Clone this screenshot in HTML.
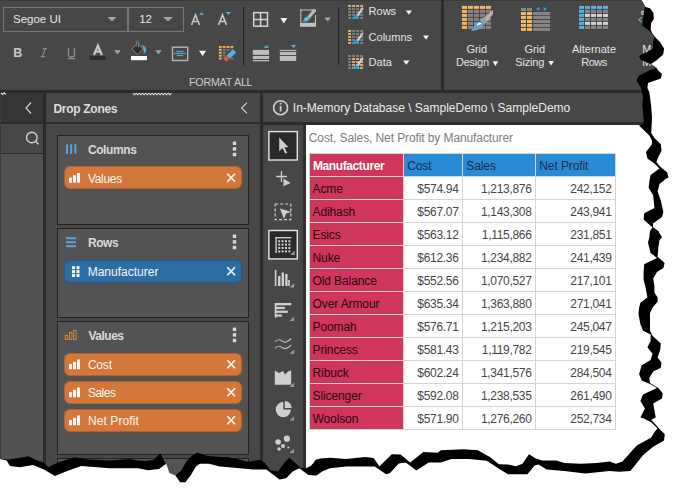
<!DOCTYPE html>
<html><head><meta charset="utf-8">
<style>
*{margin:0;padding:0;box-sizing:border-box}
html,body{width:683px;height:494px;overflow:hidden;background:#fff}
body{position:relative;font-family:"Liberation Sans",sans-serif}
.a{position:absolute}
.t{position:absolute;white-space:nowrap;line-height:1}
svg{position:absolute;overflow:visible}
</style></head><body>

<div class="a" style="left:0px;top:0px;width:683px;height:90px;background:#474747;"></div>
<div class="a" style="left:0px;top:0px;width:683px;height:1px;background:#3c3c3c;"></div>
<div class="a" style="left:0px;top:90px;width:683px;height:3px;background:#2c2c2c;"></div>
<!-- font boxes -->
<div class="a" style="left:3px;top:7px;width:125px;height:25px;border:1px solid #767676"></div>
<div class="a" style="left:128px;top:7px;width:56px;height:25px;border:1px solid #767676"></div>
<svg style="left:0;top:0" width="683" height="90">
 <g fill="#a8a8a8">
  <polygon points="107.5,17 116.5,17 112,21.5"/>
  <polygon points="163,17 173,17 168,21.5"/>
  <polygon points="114.3,50.2 120.7,50.2 117.5,54.3"/>
  <polygon points="155.3,50.2 161.7,50.2 158.5,54.3"/>
  <polygon points="324.4,17.5 331,17.5 327.7,21.5"/>
 </g>
 <g fill="#f2f2f2">
  <polygon points="199,50.8 206.2,50.8 202.6,56.1"/>
  <polygon points="280.3,17.9 287.3,17.9 283.8,23.4"/>
  <polygon points="405.8,10.6 412,10.6 408.9,14.8"/>
  <polygon points="423,35.6 429,35.6 426,39.8"/>
  <polygon points="403,60.6 409.6,60.6 406.3,64.8"/>
  <polygon points="492.6,61.2 498.2,61.2 495.4,65.9"/>
  <polygon points="548.4,61 553.8,61 551.1,65.7"/>
 </g>
 <!-- A grow / shrink -->
 <g fill="none" stroke="#c4c4c4" stroke-width="1.7">
  <path d="M191.5,25 L195.5,15 L199.5,25 M193,21.5 L198,21.5"/>
  <path d="M218.5,25 L222.5,15 L226.5,25 M220,21.5 L225,21.5"/>
 </g>
 <polygon points="198.9,14.8 204.2,14.8 201.55,12.2" fill="#5aaee0"/>
 <polygon points="225.7,12 231.1,12 228.4,14.8" fill="#5aaee0"/>
 <!-- B I U -->
 <text x="13.2" y="57" font-family="Liberation Sans" font-weight="bold" font-size="12.5" fill="#cacaca">B</text>
 <path d="M42.6,48.6 H47 M40.6,56.6 H45 M45.3,48.6 L42.4,56.6" fill="none" stroke="#8c8c8c" stroke-width="1.3"/>
 <path d="M68.5,48 V54.5 Q68.5,57 71.5,57 Q74.5,57 74.5,54.5 V48" fill="none" stroke="#8c8c8c" stroke-width="1.3"/>
 <rect x="67.9" y="58" width="7.1" height="1.3" fill="#8c8c8c"/>
 <!-- font color A -->
 <path d="M93.9,55 L97.9,45.6 L101.9,55 M95.3,51.6 L100.5,51.6" fill="none" stroke="#c8c8c8" stroke-width="2.2"/>
 <rect x="90" y="56" width="16" height="4" fill="#2e2e2e"/>
 <!-- paint bucket -->
 <path d="M137.5,43.4 L143.2,49 L137.5,54.7 L131.8,49 Z" fill="#2e2e2e" stroke="#8a8a8a" stroke-width="0.9" stroke-linejoin="round"/>
 <path d="M136.3,46.5 V42.3 Q137.5,39.2 138.7,42.3 V46.5" fill="none" stroke="#8a8a8a" stroke-width="0.8"/>
 <circle cx="138.4" cy="46.6" r="0.7" fill="#b0b0b0"/>
 <path d="M141.2,44.6 Q146.8,46 146.2,50.8 Q145.8,53.2 143.4,54 Q144.6,49.4 141.2,44.6 Z" fill="#4fa6dc"/>
 <rect x="131" y="56" width="16" height="4.2" fill="#ffffff"/>
 <!-- border box -->
 <rect x="172.5" y="47.2" width="15.2" height="13.3" fill="none" stroke="#b4b4b4" stroke-width="1.4"/>
 <g fill="#5aaee0"><rect x="176.1" y="50.9" width="7.6" height="1"/><rect x="174.1" y="52.9" width="12" height="1"/><rect x="176.7" y="55" width="6.3" height="1"/></g>
 <!-- grid eraser -->
 <g fill="#f0b060">
  <rect x="218.9" y="46" width="2.8" height="1.9"/><rect x="222.8" y="46" width="2.8" height="1.9"/><rect x="226.7" y="46" width="2.8" height="1.9"/><rect x="230.6" y="46" width="2.8" height="1.9"/>
  <rect x="218.9" y="48.9" width="2.8" height="1.9"/><rect x="218.9" y="51.8" width="2.8" height="1.9"/><rect x="218.9" y="54.7" width="2.8" height="1.9"/><rect x="218.9" y="57.6" width="2.8" height="1.9"/>
 </g>
 <g fill="#7c7c7c">
  <rect x="222.8" y="48.9" width="2.8" height="1.9"/><rect x="226.7" y="48.9" width="2.8" height="1.9"/><rect x="230.6" y="48.9" width="2.8" height="1.9"/>
  <rect x="222.8" y="51.8" width="2.8" height="1.9"/><rect x="222.8" y="54.7" width="2.8" height="1.9"/><rect x="230.6" y="57.6" width="2.8" height="1.9"/>
 </g>
 <g transform="translate(229.6,55.6) rotate(-42)">
  <rect x="-7" y="-2.6" width="14" height="5.2" fill="#474747"/>
  <rect x="-2.3" y="-2.3" width="9" height="4.6" fill="#5aaee0"/>
  <rect x="-6.7" y="-2.3" width="4" height="4.6" fill="#e2583e"/>
 </g>
 <!-- separators -->
 <rect x="243" y="7" width="1.2" height="58" fill="#262626"/>
 <rect x="338" y="7" width="1.2" height="58" fill="#262626"/>
 <rect x="441" y="0" width="3" height="90" fill="#2b2b2b"/>
 <!-- grid all borders -->
 <g fill="none" stroke="#d4d4d4" stroke-width="1.5">
  <rect x="253.7" y="12.6" width="13.8" height="13.6"/>
  <path d="M260.6,12.6 V26.2 M253.7,19.4 H267.5"/>
 </g>
 <!-- border paint -->
 <g fill="#c2c2c2">
  <rect x="300" y="9.5" width="16" height="1"/>
  <rect x="300.3" y="9.5" width="1" height="13"/>
  <rect x="315" y="15" width="1" height="8"/>
  <rect x="300" y="22.8" width="16" height="4"/>
 </g>
 <path d="M313.8,8.6 L316.4,10.8 L309.6,18.8 L307.2,16.8 Z" fill="#b8b8b8"/>
 <path d="M307,16.6 L309.8,19 Q308.5,21.8 305.5,21.8 L302.4,21.6 Q303.6,20.6 303.8,19.2 Q304.5,17 307,16.6 Z" fill="#4fa6dc"/>
 <path d="M305,19.6 Q306.2,18.4 307.6,18.8" fill="none" stroke="#e8f4fb" stroke-width="0.7"/>
 <!-- row height -->
 <g fill="#bdbdbd">
  <rect x="252.8" y="49.9" width="16.3" height="5"/><rect x="252.8" y="56" width="16.3" height="3"/><rect x="252.8" y="60" width="16.3" height="1.3"/>
  <rect x="279.8" y="49.9" width="16.4" height="1.2"/><rect x="279.8" y="52" width="16.4" height="3.1"/><rect x="279.8" y="56" width="16.4" height="5"/>
 </g>
 <polygon points="263.8,47.8 269.1,47.8 266.45,44.9" fill="#5aaee0"/>
 <polygon points="290.9,44.9 296.2,44.9 293.55,48.1" fill="#5aaee0"/>
</svg>
<svg style="left:0;top:0" width="683" height="90">
<rect x="348.1" y="5.1" width="3" height="1.8" fill="#f2b566"/><rect x="352.1" y="5.1" width="3" height="1.8" fill="#f2b566"/><rect x="356.1" y="5.1" width="3" height="1.8" fill="#f2b566"/><rect x="360.1" y="5.1" width="3" height="1.8" fill="#f2b566"/><rect x="348.1" y="8.1" width="3" height="1.8" fill="#858585"/><rect x="352.1" y="8.1" width="3" height="1.8" fill="#858585"/><rect x="356.1" y="8.1" width="3" height="1.8" fill="#858585"/><rect x="360.1" y="8.1" width="3" height="1.8" fill="#858585"/><rect x="348.1" y="11.1" width="3" height="1.8" fill="#858585"/><rect x="352.1" y="11.1" width="3" height="1.8" fill="#858585"/><rect x="356.1" y="11.1" width="3" height="1.8" fill="#858585"/><rect x="360.1" y="11.1" width="3" height="1.8" fill="#858585"/><rect x="348.1" y="14.1" width="3" height="1.8" fill="#858585"/><rect x="352.1" y="14.1" width="3" height="1.8" fill="#858585"/><rect x="356.1" y="14.1" width="3" height="1.8" fill="#858585"/><rect x="360.1" y="14.1" width="3" height="1.8" fill="#858585"/><rect x="348.1" y="17.1" width="3" height="1.8" fill="#858585"/><rect x="352.1" y="17.1" width="3" height="1.8" fill="#858585"/><rect x="356.1" y="17.1" width="3" height="1.8" fill="#858585"/><rect x="360.1" y="17.1" width="3" height="1.8" fill="#858585"/>
<path d="M356.5,15.1 L362.5,7.1 L363.5,8.6 L358.5,16.6 Z" fill="#d0d0d0"/>
<path d="M356.3,14.9 Q353.5,15.6 353,18.299999999999997 L351.5,19.1 L357.5,19.1 Q359,17.1 358.5,16.299999999999997 Z" fill="#1fa2e2"/>
<rect x="348.1" y="30.1" width="3" height="1.8" fill="#f2b566"/><rect x="352.1" y="30.1" width="3" height="1.8" fill="#858585"/><rect x="356.1" y="30.1" width="3" height="1.8" fill="#858585"/><rect x="360.1" y="30.1" width="3" height="1.8" fill="#858585"/><rect x="348.1" y="33.1" width="3" height="1.8" fill="#f2b566"/><rect x="352.1" y="33.1" width="3" height="1.8" fill="#858585"/><rect x="356.1" y="33.1" width="3" height="1.8" fill="#858585"/><rect x="360.1" y="33.1" width="3" height="1.8" fill="#858585"/><rect x="348.1" y="36.1" width="3" height="1.8" fill="#f2b566"/><rect x="352.1" y="36.1" width="3" height="1.8" fill="#858585"/><rect x="356.1" y="36.1" width="3" height="1.8" fill="#858585"/><rect x="360.1" y="36.1" width="3" height="1.8" fill="#858585"/><rect x="348.1" y="39.1" width="3" height="1.8" fill="#f2b566"/><rect x="352.1" y="39.1" width="3" height="1.8" fill="#858585"/><rect x="356.1" y="39.1" width="3" height="1.8" fill="#858585"/><rect x="360.1" y="39.1" width="3" height="1.8" fill="#858585"/><rect x="348.1" y="42.1" width="3" height="1.8" fill="#f2b566"/><rect x="352.1" y="42.1" width="3" height="1.8" fill="#858585"/><rect x="356.1" y="42.1" width="3" height="1.8" fill="#858585"/><rect x="360.1" y="42.1" width="3" height="1.8" fill="#858585"/>
<path d="M356.5,40.1 L362.5,32.1 L363.5,33.6 L358.5,41.6 Z" fill="#d0d0d0"/>
<path d="M356.3,39.900000000000006 Q353.5,40.6 353,43.3 L351.5,44.1 L357.5,44.1 Q359,42.1 358.5,41.3 Z" fill="#1fa2e2"/>
<rect x="348.1" y="55.1" width="3" height="1.8" fill="#858585"/><rect x="352.1" y="55.1" width="3" height="1.8" fill="#858585"/><rect x="356.1" y="55.1" width="3" height="1.8" fill="#858585"/><rect x="360.1" y="55.1" width="3" height="1.8" fill="#858585"/><rect x="348.1" y="58.1" width="3" height="1.8" fill="#858585"/><rect x="352.1" y="58.1" width="3" height="1.8" fill="#f2b566"/><rect x="356.1" y="58.1" width="3" height="1.8" fill="#f2b566"/><rect x="360.1" y="58.1" width="3" height="1.8" fill="#f2b566"/><rect x="348.1" y="61.1" width="3" height="1.8" fill="#858585"/><rect x="352.1" y="61.1" width="3" height="1.8" fill="#f2b566"/><rect x="356.1" y="61.1" width="3" height="1.8" fill="#f2b566"/><rect x="360.1" y="61.1" width="3" height="1.8" fill="#f2b566"/><rect x="348.1" y="64.1" width="3" height="1.8" fill="#858585"/><rect x="352.1" y="64.1" width="3" height="1.8" fill="#f2b566"/><rect x="356.1" y="64.1" width="3" height="1.8" fill="#f2b566"/><rect x="360.1" y="64.1" width="3" height="1.8" fill="#f2b566"/><rect x="348.1" y="67.1" width="3" height="1.8" fill="#858585"/><rect x="352.1" y="67.1" width="3" height="1.8" fill="#f2b566"/><rect x="356.1" y="67.1" width="3" height="1.8" fill="#f2b566"/><rect x="360.1" y="67.1" width="3" height="1.8" fill="#f2b566"/>
<path d="M356.5,65.1 L362.5,57.1 L363.5,58.6 L358.5,66.6 Z" fill="#d0d0d0"/>
<path d="M356.3,64.9 Q353.5,65.6 353,68.3 L351.5,69.1 L357.5,69.1 Q359,67.1 358.5,66.3 Z" fill="#1fa2e2"/>
<rect x="461.9" y="5.9" width="5.1" height="3" fill="#f2b566"/><rect x="467.9" y="5.9" width="5.1" height="3" fill="#f2b566"/><rect x="473.9" y="5.9" width="5.1" height="3" fill="#f2b566"/><rect x="479.9" y="5.9" width="5.1" height="3" fill="#f2b566"/><rect x="485.9" y="5.9" width="5.1" height="3" fill="#f2b566"/><rect x="461.9" y="9.9" width="5.1" height="3" fill="#f2b566"/><rect x="467.9" y="9.9" width="5.1" height="3" fill="#858585"/><rect x="473.9" y="9.9" width="5.1" height="3" fill="#858585"/><rect x="479.9" y="9.9" width="5.1" height="3" fill="#858585"/><rect x="485.9" y="9.9" width="5.1" height="3" fill="#858585"/><rect x="461.9" y="13.9" width="5.1" height="3" fill="#f2b566"/><rect x="467.9" y="13.9" width="5.1" height="3" fill="#858585"/><rect x="473.9" y="13.9" width="5.1" height="3" fill="#858585"/><rect x="479.9" y="13.9" width="5.1" height="3" fill="#858585"/><rect x="485.9" y="13.9" width="5.1" height="3" fill="#858585"/><rect x="461.9" y="17.9" width="5.1" height="3" fill="#f2b566"/><rect x="467.9" y="17.9" width="5.1" height="3" fill="#858585"/><rect x="473.9" y="17.9" width="5.1" height="3" fill="#858585"/><rect x="479.9" y="17.9" width="5.1" height="3" fill="#858585"/><rect x="485.9" y="17.9" width="5.1" height="3" fill="#858585"/><rect x="461.9" y="21.9" width="5.1" height="3" fill="#f2b566"/><rect x="467.9" y="21.9" width="5.1" height="3" fill="#858585"/><rect x="473.9" y="21.9" width="5.1" height="3" fill="#858585"/><rect x="479.9" y="21.9" width="5.1" height="3" fill="#858585"/><rect x="485.9" y="21.9" width="5.1" height="3" fill="#858585"/><rect x="461.9" y="25.9" width="5.1" height="3" fill="#f2b566"/><rect x="467.9" y="25.9" width="5.1" height="3" fill="#858585"/><rect x="473.9" y="25.9" width="5.1" height="3" fill="#858585"/><rect x="479.9" y="25.9" width="5.1" height="3" fill="#858585"/><rect x="485.9" y="25.9" width="5.1" height="3" fill="#858585"/>
<path d="M483,19 L492.9,9.7 L493,14 L486.5,22.5 Z" fill="#b4b4b4"/>
<path d="M480,20 L484,17 L487.5,21 L484,24.5 Z" fill="#a0a0a0"/>
<path d="M480.5,21.5 Q476,21 474.5,25 Q473.5,29 470.7,30.9 Q479,31 482.5,26.5 Q484.5,23.5 483.5,22.5 Z" fill="#5aa6d6"/>
<path d="M477,24.5 Q479.5,21.5 482,24 Q479.5,23.5 477.5,25.5 Z" fill="#ffffff"/>
<rect x="521" y="8" width="5" height="3" fill="#858585"/><rect x="527" y="8" width="5" height="3" fill="#858585"/>
<rect x="521" y="12" width="5" height="3" fill="#f2b566"/><rect x="527" y="12" width="5" height="3" fill="#f2b566"/><rect x="533.1" y="12" width="17" height="3" fill="#858585"/>
<rect x="521" y="15.9" width="5" height="3" fill="#f2b566"/><rect x="527" y="15.9" width="5" height="3" fill="#f2b566"/><rect x="533.1" y="15.9" width="17" height="3" fill="#858585"/>
<rect x="521" y="20" width="5" height="3" fill="#f2b566"/><rect x="527" y="20" width="5" height="3" fill="#f2b566"/><rect x="533.1" y="20" width="17" height="3" fill="#858585"/>
<rect x="521" y="23.9" width="5" height="3" fill="#f2b566"/><rect x="527" y="23.9" width="5" height="3" fill="#f2b566"/><rect x="533.1" y="23.9" width="17" height="3" fill="#858585"/>
<rect x="521" y="27.9" width="5" height="3" fill="#f2b566"/><rect x="527" y="27.9" width="5" height="3" fill="#f2b566"/><rect x="533.1" y="27.9" width="17" height="3" fill="#858585"/>
<polygon points="539.4,7 539.4,10.9 536,8.95" fill="#1aa8e8"/><polygon points="543.6,7 543.6,10.9 547,8.95" fill="#1aa8e8"/>
<rect x="579.0" y="5.9" width="5" height="3" fill="#5ab0e0"/><rect x="585.0" y="5.9" width="5" height="3" fill="#5ab0e0"/><rect x="591.0" y="5.9" width="5" height="3" fill="#5ab0e0"/><rect x="597.0" y="5.9" width="5" height="3" fill="#5ab0e0"/><rect x="603.0" y="5.9" width="5" height="3" fill="#5ab0e0"/><rect x="579.0" y="9.9" width="5" height="3" fill="#5ab0e0"/><rect x="585.0" y="9.9" width="5" height="3" fill="#858585"/><rect x="591.0" y="9.9" width="5" height="3" fill="#858585"/><rect x="597.0" y="9.9" width="5" height="3" fill="#858585"/><rect x="603.0" y="9.9" width="5" height="3" fill="#858585"/><rect x="579.0" y="13.9" width="5" height="3" fill="#5ab0e0"/><rect x="585.0" y="13.9" width="5" height="3" fill="#d2d2d2"/><rect x="591.0" y="13.9" width="5" height="3" fill="#d2d2d2"/><rect x="597.0" y="13.9" width="5" height="3" fill="#d2d2d2"/><rect x="603.0" y="13.9" width="5" height="3" fill="#d2d2d2"/><rect x="579.0" y="17.9" width="5" height="3" fill="#5ab0e0"/><rect x="585.0" y="17.9" width="5" height="3" fill="#858585"/><rect x="591.0" y="17.9" width="5" height="3" fill="#858585"/><rect x="597.0" y="17.9" width="5" height="3" fill="#858585"/><rect x="603.0" y="17.9" width="5" height="3" fill="#858585"/><rect x="579.0" y="21.9" width="5" height="3" fill="#5ab0e0"/><rect x="585.0" y="21.9" width="5" height="3" fill="#d2d2d2"/><rect x="591.0" y="21.9" width="5" height="3" fill="#d2d2d2"/><rect x="597.0" y="21.9" width="5" height="3" fill="#d2d2d2"/><rect x="603.0" y="21.9" width="5" height="3" fill="#d2d2d2"/><rect x="579.0" y="25.9" width="5" height="3" fill="#5ab0e0"/><rect x="585.0" y="25.9" width="5" height="3" fill="#858585"/><rect x="591.0" y="25.9" width="5" height="3" fill="#858585"/><rect x="597.0" y="25.9" width="5" height="3" fill="#858585"/><rect x="603.0" y="25.9" width="5" height="3" fill="#858585"/>
</svg>

<div class="a" style="left:0px;top:93px;width:43px;height:30px;background:#363636;"></div>
<div class="a" style="left:0px;top:122px;width:43px;height:2px;background:#2c2c2c;"></div>
<div class="a" style="left:0px;top:124px;width:43px;height:29px;background:#474747;"></div>
<div class="a" style="left:0px;top:153px;width:43px;height:1px;background:#2c2c2c;"></div>
<div class="a" style="left:0px;top:154px;width:43px;height:340px;background:#525252;"></div>
<div class="a" style="left:0px;top:93px;width:1px;height:400px;background:#3a3a3a;"></div>
<div class="a" style="left:43px;top:93px;width:3px;height:400px;background:#2b2b2b;"></div>
<div class="a" style="left:46px;top:93px;width:214px;height:29px;background:#474747;"></div>
<div class="a" style="left:46px;top:122px;width:214px;height:2px;background:#2c2c2c;"></div>
<div class="a" style="left:46px;top:124px;width:214px;height:370px;background:#474747;"></div>
<div class="a" style="left:260px;top:93px;width:3px;height:400px;background:#2b2b2b;"></div>
<div class="a" style="left:57px;top:135px;width:192px;height:90px;background:#535353;border:1px solid #222"></div>
<div class="a" style="left:57px;top:228px;width:192px;height:90px;background:#535353;border:1px solid #222"></div>
<div class="a" style="left:57px;top:321px;width:192px;height:134px;background:#535353;border:1px solid #222"></div>
<div class="a" style="left:57px;top:458px;width:192px;height:40px;background:#535353;border:1px solid #222"></div>
<div class="a" style="left:64px;top:166px;width:178px;height:23px;background:#d4773a;border:1px solid #b65f28;border-radius:6px"></div>
<div class="a" style="left:64px;top:259.5px;width:178px;height:23px;background:#2c6ea4;border:1px solid #245b8a;border-radius:6px"></div>
<div class="a" style="left:64px;top:352.5px;width:178px;height:23px;background:#d4773a;border:1px solid #b65f28;border-radius:6px"></div>
<div class="a" style="left:64px;top:380.5px;width:178px;height:23px;background:#d4773a;border:1px solid #b65f28;border-radius:6px"></div>
<div class="a" style="left:64px;top:408.5px;width:178px;height:23px;background:#d4773a;border:1px solid #b65f28;border-radius:6px"></div>
<div class="a" style="left:263px;top:93px;width:420px;height:29px;background:#474747;"></div>
<div class="a" style="left:263px;top:122px;width:420px;height:3px;background:#2c2c2c;"></div>
<div class="a" style="left:263px;top:125px;width:40px;height:370px;background:#474747;"></div>
<div class="a" style="left:303px;top:125px;width:3px;height:370px;background:#2f2f2f;"></div>
<div class="a" style="left:306px;top:125px;width:377px;height:370px;background:#ffffff;"></div>
<svg style="left:0;top:0" width="683" height="494">
<path d="M31,102.5 L26,108 L31,113.5" fill="none" stroke="#cfcfcf" stroke-width="1.2"/>
<circle cx="31.8" cy="137.5" r="5.3" fill="none" stroke="#d0d0d0" stroke-width="1.4"/>
<path d="M35.5,141.2 L38.5,144.2" stroke="#d0d0d0" stroke-width="1.6"/>
<path d="M247,102.6 L241.6,108 L247,113.4" fill="none" stroke="#cfcfcf" stroke-width="1.2"/>
<g fill="#5aa5d8"><rect x="66" y="144.3" width="2" height="9.5"/><rect x="70.2" y="144.3" width="2" height="9.5"/><rect x="74.4" y="144.3" width="2" height="9.5"/></g>
<g fill="#5aa5d8"><rect x="66" y="237.2" width="10" height="2"/><rect x="66" y="241.2" width="10" height="2"/><rect x="66" y="245.2" width="10" height="2"/></g>
<g fill="none" stroke="#d4873e" stroke-width="1"><rect x="65.3" y="335.5" width="2.4" height="4"/><rect x="69.5" y="332.5" width="2.4" height="7"/><rect x="73.7" y="330.5" width="2.4" height="9"/></g>
<rect x="232.8" y="141.6" width="3.4" height="3.4" fill="#d8d8d8"/>
<rect x="232.8" y="147.2" width="3.4" height="3.4" fill="#d8d8d8"/>
<rect x="232.8" y="152.8" width="3.4" height="3.4" fill="#d8d8d8"/>
<rect x="232.8" y="234.6" width="3.4" height="3.4" fill="#d8d8d8"/>
<rect x="232.8" y="240.2" width="3.4" height="3.4" fill="#d8d8d8"/>
<rect x="232.8" y="245.8" width="3.4" height="3.4" fill="#d8d8d8"/>
<rect x="232.8" y="327.6" width="3.4" height="3.4" fill="#d8d8d8"/>
<rect x="232.8" y="333.2" width="3.4" height="3.4" fill="#d8d8d8"/>
<rect x="232.8" y="338.8" width="3.4" height="3.4" fill="#d8d8d8"/>
<g fill="#fafafa"><rect x="69" y="177.6" width="3" height="5.1"/><rect x="73" y="175.3" width="3" height="7.4"/><rect x="77" y="173" width="3" height="9.7"/></g>
<g fill="#fafafa"><rect x="69" y="364.1" width="3" height="5.1"/><rect x="73" y="361.8" width="3" height="7.4"/><rect x="77" y="359.5" width="3" height="9.7"/></g>
<g fill="#fafafa"><rect x="69" y="392.1" width="3" height="5.1"/><rect x="73" y="389.8" width="3" height="7.4"/><rect x="77" y="387.5" width="3" height="9.7"/></g>
<g fill="#fafafa"><rect x="69" y="420.1" width="3" height="5.1"/><rect x="73" y="417.8" width="3" height="7.4"/><rect x="77" y="415.5" width="3" height="9.7"/></g>
<path d="M227.3,173.8 L235,181.8 M235,173.8 L227.3,181.8" stroke="#fafafa" stroke-width="1.6"/>
<path d="M227.3,267.3 L235,275.3 M235,267.3 L227.3,275.3" stroke="#fafafa" stroke-width="1.6"/>
<path d="M227.3,360.3 L235,368.3 M235,360.3 L227.3,368.3" stroke="#fafafa" stroke-width="1.6"/>
<path d="M227.3,388.3 L235,396.3 M235,388.3 L227.3,396.3" stroke="#fafafa" stroke-width="1.6"/>
<path d="M227.3,416.3 L235,424.3 M235,416.3 L227.3,424.3" stroke="#fafafa" stroke-width="1.6"/>
<rect x="72.0" y="266.2" width="3" height="3" fill="#fafafa"/>
<rect x="76.5" y="266.2" width="3" height="3" fill="#fafafa"/>
<rect x="72.0" y="270.1" width="3" height="3" fill="#fafafa"/>
<rect x="76.5" y="270.1" width="3" height="3" fill="#fafafa"/>
<rect x="72.0" y="274.0" width="3" height="3" fill="#fafafa"/>
<rect x="76.5" y="274.0" width="3" height="3" fill="#fafafa"/>
<circle cx="280.6" cy="107.7" r="7" fill="none" stroke="#cfcfcf" stroke-width="1.6"/>
<rect x="279.7" y="106" width="1.8" height="5.5" fill="#cfcfcf"/><rect x="279.7" y="102.8" width="1.8" height="1.8" fill="#cfcfcf"/>
<rect x="268.9" y="131.6" width="28.4" height="28.4" fill="#2a2a2a" stroke="#e6e6e6" stroke-width="1.4"/>
<path d="M279.2,137.6 L279.2,151.2 L282.4,148 L285.3,153.8 L287.2,152.8 L284.4,147.2 L288.6,147.2 Z" fill="#cfcfcf"/>
<path d="M281.5,171 V182 M276.2,176.5 H287" stroke="#cfcfcf" stroke-width="1.3"/>
<polygon points="283.5,178.5 290.5,183 283.5,186.3" fill="#cfcfcf"/>
<rect x="275.2" y="204" width="15.6" height="15.6" fill="none" stroke="#cfcfcf" stroke-width="1.2" stroke-dasharray="3,2"/>
<polygon points="280,208.5 291.5,212 286,213.5 284,219" fill="#cfcfcf"/>
<rect x="268.9" y="230.5" width="28.4" height="28.4" fill="#2a2a2a" stroke="#e6e6e6" stroke-width="1.4"/>
<rect x="275.4" y="237" width="1.4" height="16" fill="#cfcfcf"/><rect x="275.4" y="237" width="16" height="1.4" fill="#cfcfcf"/>
<rect x="278.2" y="240.2" width="2" height="2" fill="#cfcfcf"/>
<rect x="281.6" y="240.2" width="2" height="2" fill="#cfcfcf"/>
<rect x="285.0" y="240.2" width="2" height="2" fill="#cfcfcf"/>
<rect x="288.4" y="240.2" width="2" height="2" fill="#cfcfcf"/>
<rect x="278.2" y="243.6" width="2" height="2" fill="#cfcfcf"/>
<rect x="281.6" y="243.6" width="2" height="2" fill="#cfcfcf"/>
<rect x="285.0" y="243.6" width="2" height="2" fill="#cfcfcf"/>
<rect x="288.4" y="243.6" width="2" height="2" fill="#cfcfcf"/>
<rect x="278.2" y="247.0" width="2" height="2" fill="#cfcfcf"/>
<rect x="281.6" y="247.0" width="2" height="2" fill="#cfcfcf"/>
<rect x="285.0" y="247.0" width="2" height="2" fill="#cfcfcf"/>
<rect x="288.4" y="247.0" width="2" height="2" fill="#cfcfcf"/>
<rect x="278.2" y="250.4" width="2" height="2" fill="#cfcfcf"/>
<rect x="281.6" y="250.4" width="2" height="2" fill="#cfcfcf"/>
<rect x="285.0" y="250.4" width="2" height="2" fill="#cfcfcf"/>
<rect x="288.4" y="250.4" width="2" height="2" fill="#cfcfcf"/>
<polygon points="290.2,255.1 294.7,255.1 294.7,250.6" fill="#9a9a9a"/>
<g fill="#cfcfcf"><rect x="274.8" y="270" width="1.6" height="16"/><rect x="278" y="276" width="2.4" height="10"/><rect x="281.6" y="272.5" width="2.4" height="13.5"/><rect x="285.2" y="274" width="2.4" height="12"/><rect x="288.2" y="280" width="1.6" height="6"/></g>
<polygon points="289.6,287.5 294.1,287.5 294.1,283" fill="#9a9a9a"/>
<g fill="#cfcfcf"><rect x="274.8" y="303" width="16.4" height="2.3"/><rect x="274.8" y="306.8" width="10" height="2.3"/><rect x="274.8" y="310.6" width="13" height="2.3"/><rect x="274.8" y="314.4" width="7" height="2.3"/><rect x="274.8" y="303" width="1.6" height="14.8"/></g>
<polygon points="289.6,321.0 294.1,321.0 294.1,316.5" fill="#9a9a9a"/>
<path d="M274.8,342 Q278,338 282,341 Q286,344 291.2,338.5 M274.8,348.5 Q278,344.5 282,347.5 Q286,350.5 291.2,345" fill="none" stroke="#b4b4b4" stroke-width="1.1"/>
<polygon points="289.6,353.8 294.1,353.8 294.1,349.3" fill="#9a9a9a"/>
<path d="M274.8,370.5 L279,373 L283,371 L285,374.5 L288,371.5 L291.2,370.5 L291.2,384.7 L274.8,384.7 Z" fill="#cfcfcf"/>
<polygon points="289.6,387.1 294.1,387.1 294.1,382.6" fill="#9a9a9a"/>
<path d="M283.3,402 A7.6,7.6 0 1 0 290.9,409.6 L283.3,409.6 Z" fill="#cfcfcf"/>
<path d="M284.8,401.1 A7.2,7.2 0 0 1 291.8,408.1 L284.8,408.1 Z" fill="#cfcfcf"/>
<polygon points="289.6,420.5 294.1,420.5 294.1,416" fill="#9a9a9a"/>
<g fill="#cfcfcf"><circle cx="286.9" cy="438.7" r="3.1"/><circle cx="278.1" cy="442" r="2.8"/><circle cx="283" cy="446" r="2"/><circle cx="279.1" cy="449" r="1.8"/><circle cx="288.3" cy="447.6" r="1"/></g>
<polygon points="289.5,453.0 294.0,453.0 294.0,448.5" fill="#9a9a9a"/>
<path d="M644.5,11.2 H641.8 V14.4 H644.5 M641.8,12.8 H644" fill="none" stroke="#d8d8d8" stroke-width="0.9"/>
<path d="M641.6,17.5 L638.8,19.8 L641.6,22" fill="none" stroke="#5aaee0" stroke-width="1.1"/>
<polyline points="133.0,93.2 134.6,94.8 136.2,93.2 137.8,94.8 139.4,93.2 141.0,94.8 142.6,93.2 144.2,94.8 145.8,93.2 147.4,94.8 149.0,93.2 150.6,94.8 152.2,93.2 153.8,94.8 155.4,93.2 157.0,94.8 158.6,93.2 160.2,94.8 161.8,93.2 163.4,94.8 165.0,93.2 166.6,94.8 168.2,93.2 169.8,94.8 171.4,93.2" fill="none" stroke="#e0e0e0" stroke-width="1.1"/>
<polyline points="1.0,92.8 2.6,94.4 4.2,92.8 5.8,94.4" fill="none" stroke="#e0e0e0" stroke-width="1.1"/>
</svg>
<div class="a" style="left:309px;top:153px;width:307px;height:277px;background:#d4d4d4;"></div>
<div class="a" style="left:310px;top:154px;width:93px;height:22px;background:#d0355b;"></div>
<div class="a" style="left:404px;top:154px;width:58px;height:22px;background:#2a8bd4;"></div>
<div class="a" style="left:463px;top:154px;width:72px;height:22px;background:#2a8bd4;"></div>
<div class="a" style="left:536px;top:154px;width:79px;height:22px;background:#2a8bd4;"></div>
<div class="a" style="left:310px;top:177px;width:93px;height:22px;background:#d0355b;"></div>
<div class="a" style="left:404px;top:177px;width:58px;height:22px;background:#fff;"></div>
<div class="a" style="left:463px;top:177px;width:72px;height:22px;background:#fff;"></div>
<div class="a" style="left:536px;top:177px;width:79px;height:22px;background:#fff;"></div>
<div class="a" style="left:310px;top:200px;width:93px;height:22px;background:#d0355b;"></div>
<div class="a" style="left:404px;top:200px;width:58px;height:22px;background:#fff;"></div>
<div class="a" style="left:463px;top:200px;width:72px;height:22px;background:#fff;"></div>
<div class="a" style="left:536px;top:200px;width:79px;height:22px;background:#fff;"></div>
<div class="a" style="left:310px;top:223px;width:93px;height:22px;background:#d0355b;"></div>
<div class="a" style="left:404px;top:223px;width:58px;height:22px;background:#fff;"></div>
<div class="a" style="left:463px;top:223px;width:72px;height:22px;background:#fff;"></div>
<div class="a" style="left:536px;top:223px;width:79px;height:22px;background:#fff;"></div>
<div class="a" style="left:310px;top:246px;width:93px;height:22px;background:#d0355b;"></div>
<div class="a" style="left:404px;top:246px;width:58px;height:22px;background:#fff;"></div>
<div class="a" style="left:463px;top:246px;width:72px;height:22px;background:#fff;"></div>
<div class="a" style="left:536px;top:246px;width:79px;height:22px;background:#fff;"></div>
<div class="a" style="left:310px;top:269px;width:93px;height:22px;background:#d0355b;"></div>
<div class="a" style="left:404px;top:269px;width:58px;height:22px;background:#fff;"></div>
<div class="a" style="left:463px;top:269px;width:72px;height:22px;background:#fff;"></div>
<div class="a" style="left:536px;top:269px;width:79px;height:22px;background:#fff;"></div>
<div class="a" style="left:310px;top:292px;width:93px;height:22px;background:#d0355b;"></div>
<div class="a" style="left:404px;top:292px;width:58px;height:22px;background:#fff;"></div>
<div class="a" style="left:463px;top:292px;width:72px;height:22px;background:#fff;"></div>
<div class="a" style="left:536px;top:292px;width:79px;height:22px;background:#fff;"></div>
<div class="a" style="left:310px;top:315px;width:93px;height:22px;background:#d0355b;"></div>
<div class="a" style="left:404px;top:315px;width:58px;height:22px;background:#fff;"></div>
<div class="a" style="left:463px;top:315px;width:72px;height:22px;background:#fff;"></div>
<div class="a" style="left:536px;top:315px;width:79px;height:22px;background:#fff;"></div>
<div class="a" style="left:310px;top:338px;width:93px;height:22px;background:#d0355b;"></div>
<div class="a" style="left:404px;top:338px;width:58px;height:22px;background:#fff;"></div>
<div class="a" style="left:463px;top:338px;width:72px;height:22px;background:#fff;"></div>
<div class="a" style="left:536px;top:338px;width:79px;height:22px;background:#fff;"></div>
<div class="a" style="left:310px;top:361px;width:93px;height:22px;background:#d0355b;"></div>
<div class="a" style="left:404px;top:361px;width:58px;height:22px;background:#fff;"></div>
<div class="a" style="left:463px;top:361px;width:72px;height:22px;background:#fff;"></div>
<div class="a" style="left:536px;top:361px;width:79px;height:22px;background:#fff;"></div>
<div class="a" style="left:310px;top:384px;width:93px;height:22px;background:#d0355b;"></div>
<div class="a" style="left:404px;top:384px;width:58px;height:22px;background:#fff;"></div>
<div class="a" style="left:463px;top:384px;width:72px;height:22px;background:#fff;"></div>
<div class="a" style="left:536px;top:384px;width:79px;height:22px;background:#fff;"></div>
<div class="a" style="left:310px;top:407px;width:93px;height:22px;background:#d0355b;"></div>
<div class="a" style="left:404px;top:407px;width:58px;height:22px;background:#fff;"></div>
<div class="a" style="left:463px;top:407px;width:72px;height:22px;background:#fff;"></div>
<div class="a" style="left:536px;top:407px;width:79px;height:22px;background:#fff;"></div>
<div class="t" style="top:159.64px;font-size:12px;color:#ffffff;left:313.00px;font-weight:700;letter-spacing:-0.4px;">Manufacturer</div>
<div class="t" style="top:159.84px;font-size:12px;color:#1e2d4f;left:407.30px;letter-spacing:-0.1px;">Cost</div>
<div class="t" style="top:159.84px;font-size:12px;color:#1e2d4f;left:466.30px;letter-spacing:-0.1px;">Sales</div>
<div class="t" style="top:159.84px;font-size:12px;color:#1e2d4f;left:539.30px;letter-spacing:-0.1px;">Net Profit</div>
<div class="t" style="top:182.64px;font-size:12px;color:#2b0610;left:312.50px;letter-spacing:-0.1px;">Acme</div>
<div class="t" style="top:182.64px;font-size:12px;color:#454545;right:224.40px;letter-spacing:-0.3px;">$574.94</div>
<div class="t" style="top:182.64px;font-size:12px;color:#454545;right:151.40px;letter-spacing:-0.3px;">1,213,876</div>
<div class="t" style="top:182.64px;font-size:12px;color:#454545;right:71.40px;letter-spacing:-0.3px;">242,152</div>
<div class="t" style="top:205.64px;font-size:12px;color:#2b0610;left:312.50px;letter-spacing:-0.1px;">Adihash</div>
<div class="t" style="top:205.64px;font-size:12px;color:#454545;right:224.40px;letter-spacing:-0.3px;">$567.07</div>
<div class="t" style="top:205.64px;font-size:12px;color:#454545;right:151.40px;letter-spacing:-0.3px;">1,143,308</div>
<div class="t" style="top:205.64px;font-size:12px;color:#454545;right:71.40px;letter-spacing:-0.3px;">243,941</div>
<div class="t" style="top:228.64px;font-size:12px;color:#2b0610;left:312.50px;letter-spacing:-0.1px;">Esics</div>
<div class="t" style="top:228.64px;font-size:12px;color:#454545;right:224.40px;letter-spacing:-0.3px;">$563.12</div>
<div class="t" style="top:228.64px;font-size:12px;color:#454545;right:151.40px;letter-spacing:-0.3px;">1,115,866</div>
<div class="t" style="top:228.64px;font-size:12px;color:#454545;right:71.40px;letter-spacing:-0.3px;">231,851</div>
<div class="t" style="top:251.64px;font-size:12px;color:#2b0610;left:312.50px;letter-spacing:-0.1px;">Nuke</div>
<div class="t" style="top:251.64px;font-size:12px;color:#454545;right:224.40px;letter-spacing:-0.3px;">$612.36</div>
<div class="t" style="top:251.64px;font-size:12px;color:#454545;right:151.40px;letter-spacing:-0.3px;">1,234,882</div>
<div class="t" style="top:251.64px;font-size:12px;color:#454545;right:71.40px;letter-spacing:-0.3px;">241,439</div>
<div class="t" style="top:274.64px;font-size:12px;color:#2b0610;left:312.50px;letter-spacing:-0.1px;">Old Balance</div>
<div class="t" style="top:274.64px;font-size:12px;color:#454545;right:224.40px;letter-spacing:-0.3px;">$552.56</div>
<div class="t" style="top:274.64px;font-size:12px;color:#454545;right:151.40px;letter-spacing:-0.3px;">1,070,527</div>
<div class="t" style="top:274.64px;font-size:12px;color:#454545;right:71.40px;letter-spacing:-0.3px;">217,101</div>
<div class="t" style="top:297.64px;font-size:12px;color:#2b0610;left:312.50px;letter-spacing:-0.1px;">Over Armour</div>
<div class="t" style="top:297.64px;font-size:12px;color:#454545;right:224.40px;letter-spacing:-0.3px;">$635.34</div>
<div class="t" style="top:297.64px;font-size:12px;color:#454545;right:151.40px;letter-spacing:-0.3px;">1,363,880</div>
<div class="t" style="top:297.64px;font-size:12px;color:#454545;right:71.40px;letter-spacing:-0.3px;">271,041</div>
<div class="t" style="top:320.64px;font-size:12px;color:#2b0610;left:312.50px;letter-spacing:-0.1px;">Poomah</div>
<div class="t" style="top:320.64px;font-size:12px;color:#454545;right:224.40px;letter-spacing:-0.3px;">$576.71</div>
<div class="t" style="top:320.64px;font-size:12px;color:#454545;right:151.40px;letter-spacing:-0.3px;">1,215,203</div>
<div class="t" style="top:320.64px;font-size:12px;color:#454545;right:71.40px;letter-spacing:-0.3px;">245,047</div>
<div class="t" style="top:343.64px;font-size:12px;color:#2b0610;left:312.50px;letter-spacing:-0.1px;">Princess</div>
<div class="t" style="top:343.64px;font-size:12px;color:#454545;right:224.40px;letter-spacing:-0.3px;">$581.43</div>
<div class="t" style="top:343.64px;font-size:12px;color:#454545;right:151.40px;letter-spacing:-0.3px;">1,119,782</div>
<div class="t" style="top:343.64px;font-size:12px;color:#454545;right:71.40px;letter-spacing:-0.3px;">219,545</div>
<div class="t" style="top:366.64px;font-size:12px;color:#2b0610;left:312.50px;letter-spacing:-0.1px;">Ribuck</div>
<div class="t" style="top:366.64px;font-size:12px;color:#454545;right:224.40px;letter-spacing:-0.3px;">$602.24</div>
<div class="t" style="top:366.64px;font-size:12px;color:#454545;right:151.40px;letter-spacing:-0.3px;">1,341,576</div>
<div class="t" style="top:366.64px;font-size:12px;color:#454545;right:71.40px;letter-spacing:-0.3px;">284,504</div>
<div class="t" style="top:389.64px;font-size:12px;color:#2b0610;left:312.50px;letter-spacing:-0.1px;">Slicenger</div>
<div class="t" style="top:389.64px;font-size:12px;color:#454545;right:224.40px;letter-spacing:-0.3px;">$592.08</div>
<div class="t" style="top:389.64px;font-size:12px;color:#454545;right:151.40px;letter-spacing:-0.3px;">1,238,535</div>
<div class="t" style="top:389.64px;font-size:12px;color:#454545;right:71.40px;letter-spacing:-0.3px;">261,490</div>
<div class="t" style="top:412.64px;font-size:12px;color:#2b0610;left:312.50px;letter-spacing:-0.1px;">Woolson</div>
<div class="t" style="top:412.64px;font-size:12px;color:#454545;right:224.40px;letter-spacing:-0.3px;">$571.90</div>
<div class="t" style="top:412.64px;font-size:12px;color:#454545;right:151.40px;letter-spacing:-0.3px;">1,276,260</div>
<div class="t" style="top:412.64px;font-size:12px;color:#454545;right:71.40px;letter-spacing:-0.3px;">252,734</div>
<div class="t" style="top:14.07px;font-size:11.5px;color:#e6e6e6;left:13.00px;">Segoe UI</div>
<div class="t" style="top:14.07px;font-size:11.5px;color:#e6e6e6;left:139.20px;">12</div>
<div class="t" style="top:76.74px;font-size:10.7px;color:#cdcdcd;left:189.00px;letter-spacing:-0.22px;">FORMAT ALL</div>
<div class="t" style="top:6.49px;font-size:11px;color:#e4e4e4;left:368.60px;">Rows</div>
<div class="t" style="top:31.59px;font-size:11px;color:#e4e4e4;left:368.60px;">Columns</div>
<div class="t" style="top:56.59px;font-size:11px;color:#e4e4e4;left:368.60px;">Data</div>
<div class="t" style="top:43.89px;font-size:11px;color:#e4e4e4;left:466.40px;">Grid</div>
<div class="t" style="top:57.29px;font-size:11px;color:#e4e4e4;left:455.90px;letter-spacing:-0.2px;">Design</div>
<div class="t" style="top:43.89px;font-size:11px;color:#e4e4e4;left:524.40px;">Grid</div>
<div class="t" style="top:57.29px;font-size:11px;color:#e4e4e4;left:515.30px;letter-spacing:-0.2px;">Sizing</div>
<div class="t" style="top:43.89px;font-size:11px;color:#e4e4e4;left:572.00px;">Alternate</div>
<div class="t" style="top:57.29px;font-size:11px;color:#e4e4e4;left:581.30px;letter-spacing:-0.5px;">Rows</div>
<div class="t" style="top:43.89px;font-size:11px;color:#e4e4e4;left:642.30px;">M</div>
<div class="t" style="top:57.29px;font-size:11px;color:#e4e4e4;left:642.30px;">M</div>
<div class="t" style="top:102.84px;font-size:12px;color:#dedede;left:53.40px;font-weight:700;letter-spacing:-0.28px;">Drop Zones</div>
<div class="t" style="top:143.64px;font-size:12px;color:#dadada;left:87.90px;font-weight:700;letter-spacing:-0.4px;">Columns</div>
<div class="t" style="top:236.64px;font-size:12px;color:#dadada;left:87.90px;font-weight:700;letter-spacing:-0.4px;">Rows</div>
<div class="t" style="top:329.84px;font-size:12px;color:#dadada;left:88.50px;font-weight:700;letter-spacing:-0.5px;">Values</div>
<div class="t" style="top:172.84px;font-size:12px;color:#f6f6f6;left:87.90px;letter-spacing:-0.3px;">Values</div>
<div class="t" style="top:265.84px;font-size:12px;color:#f6f6f6;left:87.70px;">Manufacturer</div>
<div class="t" style="top:359.04px;font-size:12px;color:#f6f6f6;left:87.90px;letter-spacing:-0.2px;">Cost</div>
<div class="t" style="top:387.04px;font-size:12px;color:#f6f6f6;left:87.90px;letter-spacing:-0.5px;">Sales</div>
<div class="t" style="top:415.04px;font-size:12px;color:#f6f6f6;left:87.90px;letter-spacing:0.1px;">Net Profit</div>
<div class="t" style="top:102.14px;font-size:12px;color:#ececec;left:292.80px;">In-Memory Database \ SampleDemo \ SampleDemo</div>
<div class="t" style="top:131.74px;font-size:12px;color:#7c7c7c;left:308.80px;letter-spacing:-0.1px;">Cost, Sales, Net Profit by Manufacturer</div>
<svg class="a" style="left:0;top:0" width="683" height="494" viewBox="0 0 683 494"><polygon points="641.7,0.0 644.9,6.4 644.0,12.8 643.0,19.0 642.3,25.5 649.0,30.6 654.4,37.0 653.0,42.0 653.0,48.5 645.5,53.0 639.0,56.0 641.0,60.0 650.6,64.0 656.4,67.8 648.0,71.0 639.0,75.4 636.6,80.5 641.0,88.0 643.0,97.0 642.3,106.0 643.6,117.5 643.6,124.0 639.0,125.5 644.0,130.3 649.3,135.4 652.0,140.5 652.0,144.3 646.0,152.0 647.4,158.4 654.4,163.5 659.5,168.6 650.6,175.0 649.3,181.4 648.7,187.8 653.2,195.4 654.4,208.0 644.2,213.3 643.6,219.6 648.0,223.5 652.5,227.3 650.0,231.0 649.3,237.5 648.0,242.7 650.6,252.9 657.0,258.0 644.2,264.3 643.6,272.0 643.6,279.6 645.5,287.3 647.4,297.5 640.4,302.7 639.1,307.8 638.5,314.0 640.4,324.3 643.0,330.7 650.6,334.5 650.6,341.0 647.4,347.3 652.5,353.7 650.6,360.0 641.7,365.2 639.1,374.0 641.7,380.5 650.6,384.3 657.0,388.0 643.0,394.5 640.4,401.0 644.9,408.6 640.4,417.5 643.2,418.2 651.2,422.2 657.6,428.6 655.2,431.0 651.2,437.4 636.8,445.4 629.6,453.4 622.4,461.4 616.0,463.8 609.5,461.4 596.6,463.0 580.5,463.8 564.4,463.0 556.4,460.6 541.9,460.6 535.4,458.2 529.0,454.2 522.5,463.8 516.0,466.2 508.0,464.6 499.0,464.3 490.2,457.2 477.9,450.2 463.8,449.3 441.0,450.2 437.5,452.8 423.4,452.0 410.2,462.5 400.5,454.6 391.8,454.3 379.4,466.6 373.7,458.0 365.2,457.1 346.1,459.0 330.0,457.8 320.4,458.4 315.8,459.8 311.1,465.7 305.9,468.3 300.6,467.7 295.3,463.0 289.4,457.8 283.5,463.7 278.2,471.6 270.3,470.3 265.0,463.0 259.8,459.8 247.9,461.7 240.0,459.8 228.0,456.9 220.0,457.1 206.4,455.8 197.2,452.5 191.9,455.8 186.7,461.0 181.4,470.3 175.5,475.6 169.5,473.0 165.6,463.7 160.3,453.2 153.7,459.8 145.8,461.0 137.9,460.4 130.0,459.1 109.8,460.6 87.9,459.5 74.7,457.3 57.1,462.8 48.3,467.2 43.9,462.8 35.1,459.5 28.6,456.2 8.8,459.5 0.0,459.0 0.0,494.0 683.0,494.0 683.0,0.0" fill="#000"/><polygon points="641.7,0.0 645.5,7.0 650.0,8.3 653.4,12.8 653.8,19.0 651.2,23.0 650.6,29.3 652.0,33.0 655.0,37.0 660.0,42.0 664.0,48.5 663.4,53.6 662.7,55.0 658.3,58.7 657.0,60.0 651.0,64.0 656.4,67.8 658.0,70.3 662.0,74.0 660.8,78.6 648.0,83.0 647.4,88.0 649.3,92.0 651.2,106.0 652.0,117.5 651.2,132.9 654.4,138.0 660.8,144.3 661.5,150.7 658.3,157.0 656.4,162.0 659.5,166.0 667.2,172.4 668.5,177.5 666.0,178.8 659.5,184.0 657.6,191.6 660.8,200.5 663.4,212.0 662.0,217.0 653.0,223.5 653.0,227.3 658.3,231.0 662.0,237.5 659.5,240.0 658.3,247.8 657.6,256.7 664.6,263.0 663.4,268.0 657.0,272.0 653.2,278.4 654.4,286.0 654.4,292.4 657.6,297.5 657.6,301.4 652.5,307.8 650.0,312.9 650.0,330.7 652.5,335.8 660.8,343.5 660.2,349.8 657.6,357.5 661.5,362.7 660.8,367.8 653.2,371.6 649.3,378.0 650.0,383.0 658.3,388.0 662.7,393.3 662.0,398.4 653.2,403.5 654.4,410.0 655.7,417.5 651.2,419.8 660.0,429.4 664.8,434.2 664.0,440.6 652.8,447.0 643.2,455.0 636.8,463.0 630.4,471.0 619.2,471.8 609.5,471.0 585.3,473.5 564.4,471.0 546.7,469.5 538.6,464.6 534.6,465.4 527.4,474.3 508.0,474.3 499.0,468.7 486.7,460.8 469.0,459.0 451.5,459.0 441.0,462.5 428.7,462.5 416.4,470.4 405.8,462.5 398.8,463.4 390.0,473.0 386.1,474.2 374.7,466.6 346.1,466.6 330.0,468.3 323.0,471.0 316.4,475.6 308.5,474.9 299.3,468.3 292.7,471.6 286.1,478.2 279.5,479.5 266.4,469.6 253.2,469.6 240.0,468.3 220.0,466.4 209.0,463.7 199.8,463.7 195.9,466.4 190.6,475.6 185.3,482.2 180.0,482.2 175.5,475.6 169.5,473.0 166.2,463.7 159.0,469.0 148.4,470.3 137.9,468.3 130.0,468.3 109.8,468.3 81.3,466.1 65.9,471.6 54.9,476.0 43.9,469.4 33.0,465.0 19.8,467.2 9.9,466.1 6.6,460.6 0.0,459.0 0.0,494.0 683.0,494.0 683.0,0.0" fill="#fff"/></svg>
</body></html>
